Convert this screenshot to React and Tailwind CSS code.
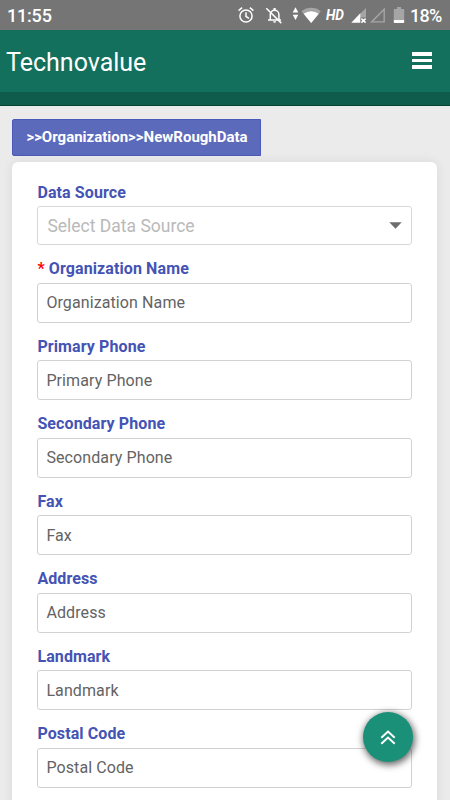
import React from 'react';

const fields = [
    { label: 'Organization Name', required: true },
    { label: 'Primary Phone' },
    { label: 'Secondary Phone' },
    { label: 'Fax' },
    { label: 'Address' },
    { label: 'Landmark' },
    { label: 'Postal Code' },
];

const StatusIcons = () => (
    <svg width="175" height="30" viewBox="235 0 175 30" fill="none" className="block">
        {/* alarm */}
        <g stroke="#fff" strokeWidth="1.5">
            <circle cx="246" cy="16" r="6.1" />
            <path d="M246 12.2v4.3l3 1.8M238.6 10.6l3.5-2.9M253.4 10.6l-3.5-2.9" />
        </g>
        {/* notifications off */}
        <g stroke="#fff" strokeWidth="1.5">
            <path d="M270.3 19.7v-5.2a4.3 4.3 0 0 1 8.6 0v5.2M268 20.1h13" />
            <path d="M274.6 8v2.2" strokeWidth="2.2" />
            <path d="M266.3 8.3l15 14.8" />
        </g>
        <path d="M273.1 21.3h3a1.5 1.5 0 0 1-3 0z" fill="#fff" />
        {/* data activity + wifi */}
        <path d="M295.5 7.3l2.8 5.2h-5.6zM295.5 20l2.8-5.2h-5.6z" fill="#fff" />
        <path d="M301.5 11.2a15.5 15.5 0 0 1 19.4 0l-9.7 11.7z" fill="#a5a5a5" />
        <path d="M303.6 13.8a12.6 12.6 0 0 1 15.2 0l-7.6 9.1z" fill="#fff" />
        <text x="326" y="20" fill="#fff" fontSize="14.5" fontWeight="700" fontStyle="italic" fontFamily="Roboto, sans-serif" textLength="18" lengthAdjust="spacingAndGlyphs">HD</text>
        {/* signal */}
        <path d="M366 8v9.5h-6v-3.5z" fill="#a5a5a5" />
        <path d="M351.3 22.7L360.3 13.2v9.5z" fill="#fff" />
        <path d="M361.4 18.6l4.2 4M365.6 18.6l-4.2 4" stroke="#fff" strokeWidth="1.5" />
        <path d="M384.2 9.3v12.6h-12.5z" stroke="#a5a5a5" strokeWidth="1.4" />
        {/* battery */}
        <path d="M397 7h4v2h2.5q.7 0 .7.8V20h-10.4V9.8q0-.8.7-.8h2.5z" fill="#a5a5a5" />
        <path d="M393.8 20h10.4v2.3q0 .8-.7.8h-9q-.7 0-.7-.8z" fill="#fff" />
    </svg>
);

const StatusBar = () => (
    <div className="flex h-[30px] items-center justify-between bg-[#757575] pl-[7px] pr-[7px] text-white">
        <span className="pt-px text-[18px] font-medium leading-[30px] tracking-[-0.2px]">11:55</span>
        <div className="flex items-center">
            <StatusIcons />
            <span className="w-[33px] whitespace-nowrap pt-px text-[18px] font-medium leading-[30px] tracking-[-0.7px]">18%</span>
        </div>
    </div>
);

const Header = () => (
    <header>
        <div className="flex h-[62px] items-center justify-between bg-[#13705c] pl-[6px] pr-[18px]">
            <h1 className="pt-[4px] text-[25px] leading-8 text-white">Technovalue</h1>
            <button aria-label="Menu" className="flex flex-col gap-[3px] pb-px">
                <span className="h-[3.5px] w-5 bg-white" />
                <span className="h-[3.5px] w-5 bg-white" />
                <span className="h-[3.5px] w-5 bg-white" />
            </button>
        </div>
        <div className="h-[14px] border-b border-[#07432f] bg-[#105c4c]" />
    </header>
);

const Label = ({ children, required }) => (
    <label className="mb-[3.5px] block text-[16px] font-bold leading-5 tracking-[0.1px] text-[#4453b4]">
        {required && <span className="text-[#f00]">* </span>}
        {children}
    </label>
);

const App = () => {
    return (
        <div className="relative h-[800px] w-[450px] overflow-hidden bg-[#ebebeb] font-['Roboto',sans-serif]">
            <StatusBar />
            <Header />

            <main className="pl-[12.4px] pr-[12.8px] pt-[13px]">
                <div className="flex h-[37px] w-[249px] items-center rounded-l-[2px] border border-[#4a5ab8] bg-[#5c6abc] pl-[13px] text-[15px] font-bold text-white">
                    &gt;&gt;Organization&gt;&gt;NewRoughData
                </div>

                <form className="mt-[6.4px] h-[700px] rounded-[6px] bg-white px-[25px] pt-[20.5px] shadow-[0_0_12px_rgba(0,0,0,0.08)]">
                    <Label>Data Source</Label>
                    <div className="flex h-[39px] items-center justify-between rounded-[3px] border border-[#d8d8d8] pl-[9px] pr-[9px] text-[17.5px] text-[#b9b9b9]">
                        <span>Select Data Source</span>
                        <svg width="13" height="7" viewBox="0 0 13 7" className="mb-px">
                            <path d="M.3.3h12.4L6.5 6.7z" fill="#6d6d6d" />
                        </svg>
                    </div>

                    {fields.map(({ label, required }) => (
                        <div key={label} className="pt-[14px]">
                            <Label required={required}>{label}</Label>
                            <input
                                placeholder={label}
                                className="block h-10 w-full rounded-[3px] border border-[#d2d2d2] px-2 text-[16px] tracking-[0.1px] placeholder:text-[#636363]"
                            />
                        </div>
                    ))}
                </form>
            </main>

            <button
                aria-label="Scroll to top"
                className="absolute left-[362.5px] top-[712px] flex size-[50px] items-center justify-center rounded-full bg-[#1b9078] shadow-[1px_2px_7px_1px_rgba(0,0,0,0.6)]"
            >
                <svg width="16" height="15" viewBox="0 0 16 15" fill="none" stroke="#fff" strokeWidth="2">
                    <path d="M1.3 7.7L8 1.6l6.7 6.1M1.3 13.7L8 7.6l6.7 6.1" />
                </svg>
            </button>
        </div>
    );
};

export default App;
